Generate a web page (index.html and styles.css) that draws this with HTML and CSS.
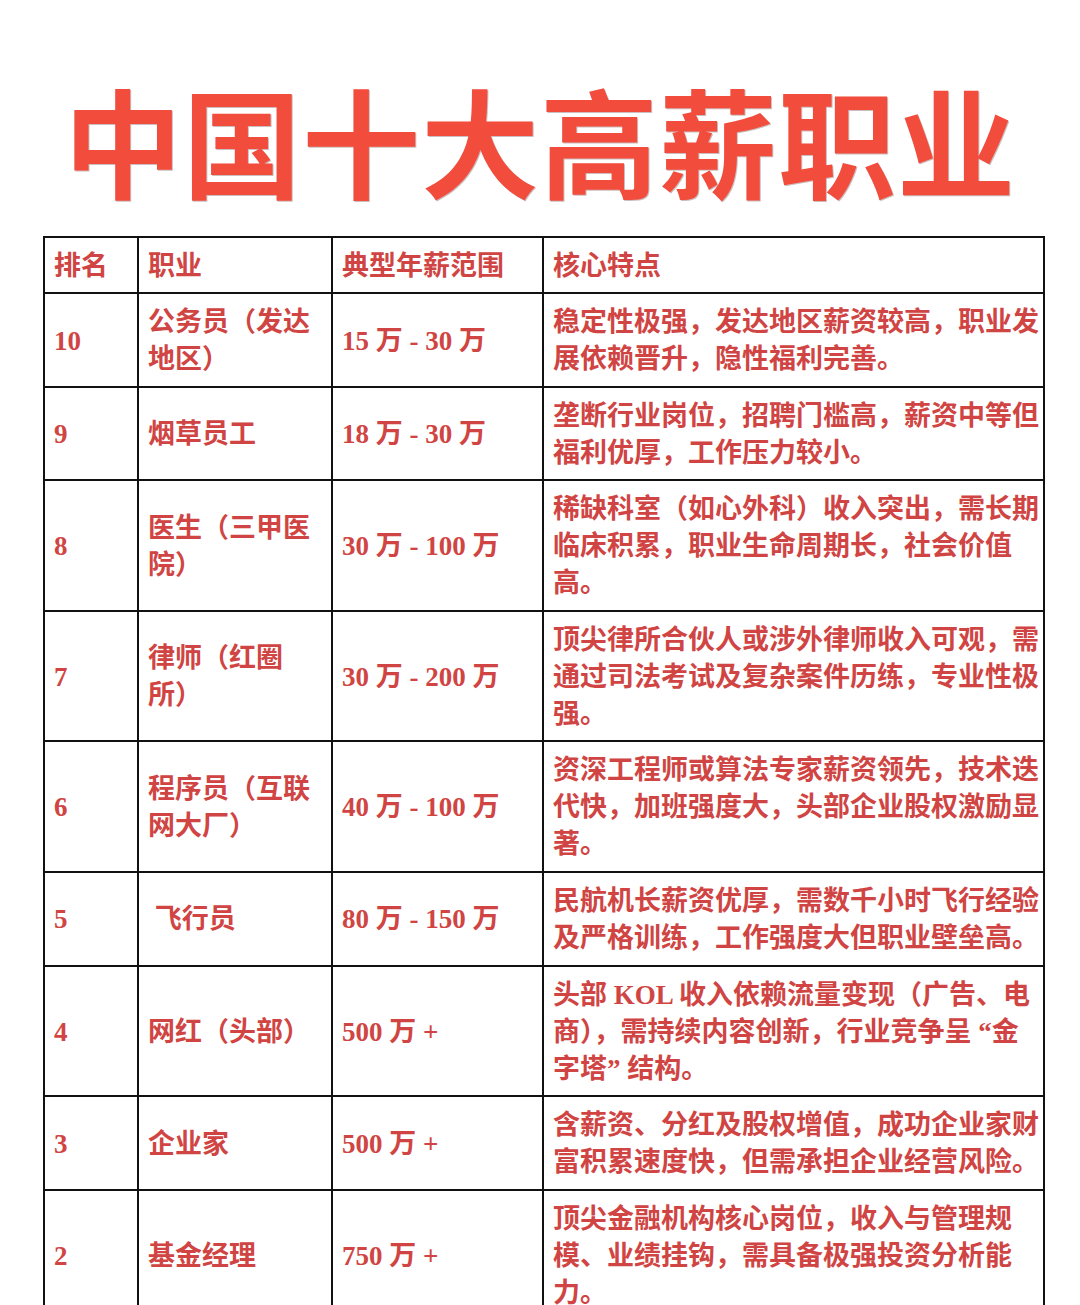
FILE: index.html
```html
<!DOCTYPE html>
<html lang="zh-CN">
<head>
<meta charset="utf-8">
<title>中国十大高薪职业</title>
<link rel="stylesheet" href="styles.css">
</head>
<body>
<div class="page">
  <h1 class="title">中国十大高薪职业</h1>
  <table class="jobs">
    <colgroup>
      <col class="c-rank">
      <col class="c-job">
      <col class="c-pay">
      <col class="c-desc">
    </colgroup>
    <thead>
      <tr><th>排名</th><th>职业</th><th>典型年薪范围</th><th>核心特点</th></tr>
    </thead>
    <tbody>
      <tr><td>10</td><td>公务员（发达<br>地区）</td><td>15 万 - 30 万</td><td class="desc">稳定性极强，发达地区薪资较高，职业发<br>展依赖晋升，隐性福利完善。</td></tr>
      <tr><td>9</td><td>烟草员工</td><td>18 万 - 30 万</td><td class="desc">垄断行业岗位，招聘门槛高，薪资中等但<br>福利优厚，工作压力较小。</td></tr>
      <tr><td>8</td><td>医生（三甲医<br>院）</td><td>30 万 - 100 万</td><td class="desc">稀缺科室（如心外科）收入突出，需长期<br>临床积累，职业生命周期长，社会价值<br>高。</td></tr>
      <tr><td>7</td><td>律师（红圈<br>所）</td><td>30 万 - 200 万</td><td class="desc">顶尖律所合伙人或涉外律师收入可观，需<br>通过司法考试及复杂案件历练，专业性极<br>强。</td></tr>
      <tr><td>6</td><td>程序员（互联<br>网大厂）</td><td>40 万 - 100 万</td><td class="desc">资深工程师或算法专家薪资领先，技术迭<br>代快，加班强度大，头部企业股权激励显<br>著。</td></tr>
      <tr><td>5</td><td>&nbsp;飞行员</td><td>80 万 - 150 万</td><td class="desc">民航机长薪资优厚，需数千小时飞行经验<br>及严格训练，工作强度大但职业壁垒高。</td></tr>
      <tr><td>4</td><td>网红（头部）</td><td>500 万 +</td><td class="desc">头部 KOL 收入依赖流量变现（广告、电<br>商），需持续内容创新，行业竞争呈 “金<br>字塔” 结构。</td></tr>
      <tr><td>3</td><td>企业家</td><td>500 万 +</td><td class="desc">含薪资、分红及股权增值，成功企业家财<br>富积累速度快，但需承担企业经营风险。</td></tr>
      <tr><td>2</td><td>基金经理</td><td>750 万 +</td><td class="desc">顶尖金融机构核心岗位，收入与管理规<br>模、业绩挂钩，需具备极强投资分析能<br>力。</td></tr>
    </tbody>
  </table>
</div>
</body>
</html>
```

FILE: styles.css
```css
html, body {
  margin: 0;
  padding: 0;
  background: #ffffff;
}

.page {
  width: 1080px;
  overflow: hidden;
}

.title {
  margin: 80px 0 38px;
  font-family: "Noto Sans CJK SC", sans-serif;
  font-size: 118px;
  line-height: 118px;
  font-weight: 700;
  letter-spacing: 1px;
  text-align: center;
  color: #f24c3c;
  text-shadow: 1px 1px 0 rgba(110, 70, 70, 0.35);
}

.jobs {
  margin-left: 43px;
  width: 1000px;
  table-layout: fixed;
  border-collapse: collapse;
  font-family: "Liberation Serif", "Noto Sans CJK SC", serif;
  font-size: 27px;
  line-height: 37px;
  font-weight: 700;
  color: #d04543;
}

.c-rank { width: 94px; }
.c-job { width: 194px; }
.c-pay { width: 211px; }
.c-desc { width: 501px; }

.jobs th,
.jobs td {
  border: 2px solid #111111;
  padding: 10px 2px 7.6px 9px;
  text-align: left;
  vertical-align: middle;
  font-weight: 700;
  white-space: nowrap;
}

.jobs th {
  padding-bottom: 7px;
}

.jobs td:first-child,
.jobs th:first-child {
  padding-left: 9px;
}
```
